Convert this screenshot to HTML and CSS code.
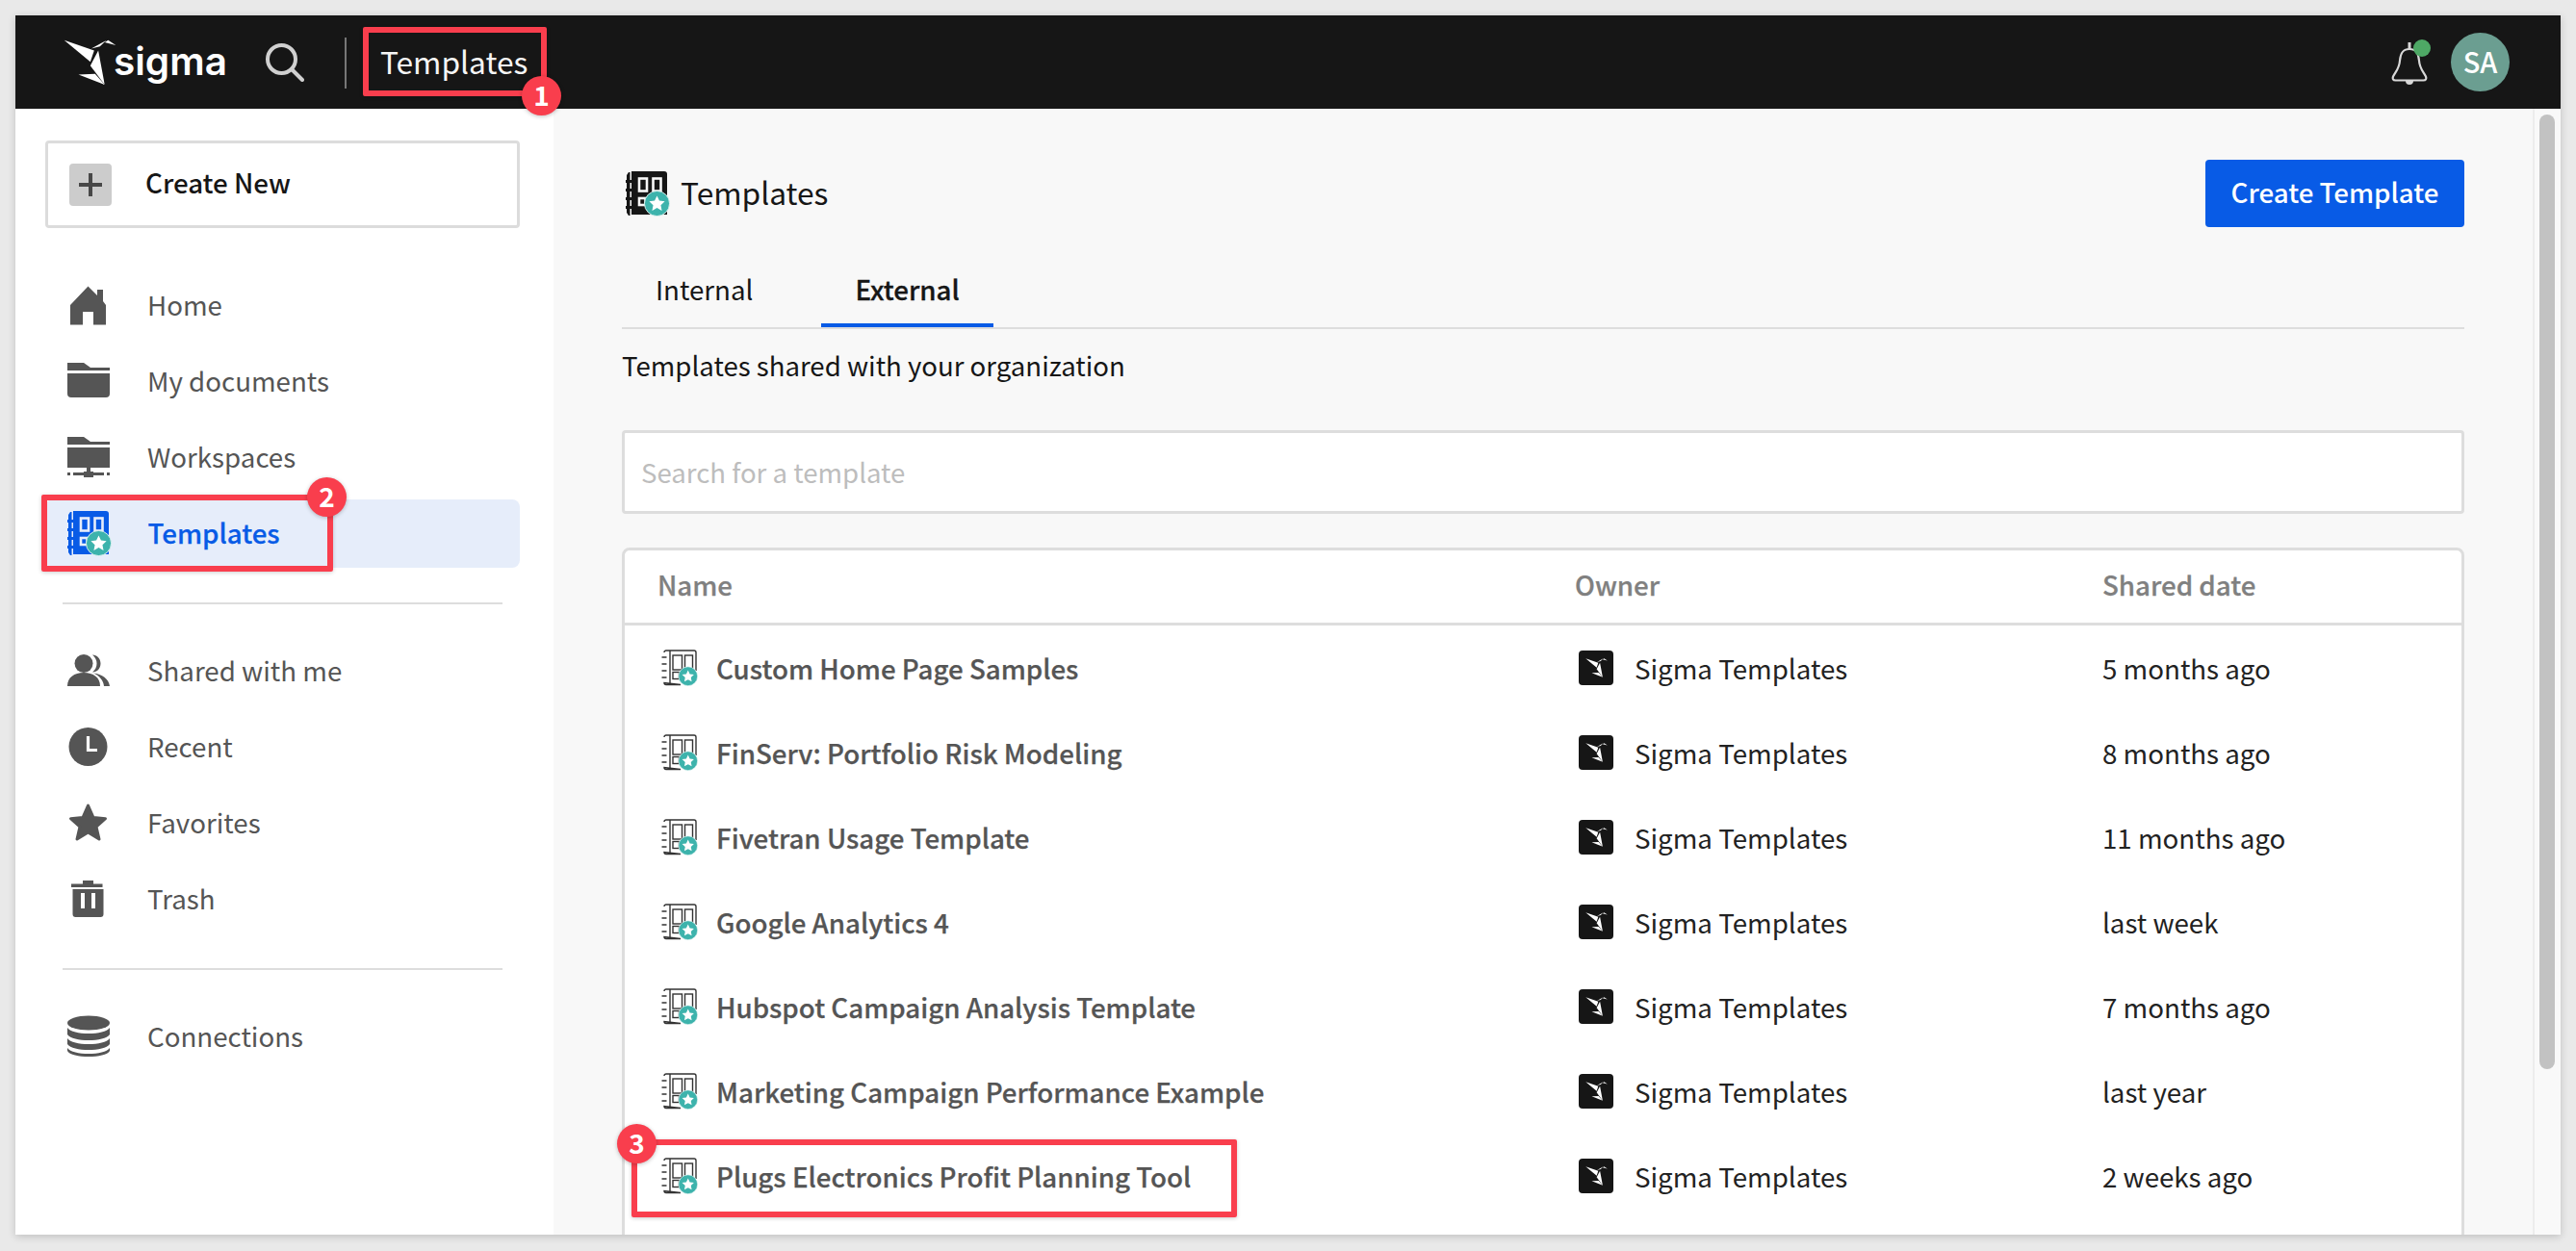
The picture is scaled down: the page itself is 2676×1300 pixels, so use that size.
FILE: index.html
```html
<!DOCTYPE html>
<html lang="en">
<head>
  <meta charset="UTF-8">
  <meta name="viewport" content="width=device-width, initial-scale=1.0">
  <title>Sigma Templates</title>
  <link rel="stylesheet" href="styles.css">
</head>
<body>
  <svg class="icon-defs" xmlns="http://www.w3.org/2000/svg">
    <symbol id="bird" viewBox="76 90 166 145">
      <path d="M78 92 172 125 160 160Z"/>
      <path d="M163 119 210 93 190 112Z"/>
      <path d="M205 99 216 92 240 108Z"/>
      <path d="M185 125 160 172 205 232Z"/>
      <path d="M123 200 175 198 205 232Z"/>
    </symbol>
    <symbol id="star-badge" viewBox="0 0 30 30">
      <circle cx="15" cy="15" r="14.500" fill="#3db3ac" stroke="#e6f5f3" stroke-width="1"/>
      <path d="M15 6l2.700 5.800 6.300.8-4.600 4.300 1.200 6.300-5.600-3.100-5.600 3.100 1.200-6.300-4.600-4.300 6.300-.8z" fill="#fff"/>
    </symbol>
    <symbol id="book-solid" viewBox="0 0 46 47">
      <path d="M6 0h34a3 3 0 0 1 3 3v42H6z"/>
      <path d="M0 9h6v3H0zM0 18h6v3H0zM0 27h6v3H0zM0 36h6v3H0z"/>
      <path d="M1 4 3 1h1.500v45H3l-2-3z"/>
      <g fill="none" stroke="var(--cut)" stroke-width="2.600">
        <rect x="14" y="7.500" width="8" height="13"/>
        <rect x="28.500" y="7.500" width="8" height="13"/>
        <rect x="14" y="28" width="6.500" height="7"/>
      </g>
      <use href="#star-badge" x="19" y="20" width="27" height="27"/>
    </symbol>
    <symbol id="book-line" viewBox="0 0 38 38">
      <g fill="none" stroke="#333" stroke-width="1.400">
        <path d="M3 3A2 2 0 0 1 5 1H34A2 2 0 0 1 36 3V22M20 36.500H5A2 2 0 0 1 3 34.500z"/>
        <path d="M9 1v35.500"/>
        <path d="M.5 8h5M.5 15h5M.5 22h5M.5 29h5"/>
        <rect x="12" y="6" width="9.500" height="15"/>
        <rect x="24.500" y="6" width="8" height="15"/>
        <rect x="12" y="23.500" width="6.500" height="7"/>
      </g>
      <use href="#star-badge" x="17.500" y="17.500" width="20.500" height="20.500"/>
    </symbol>
  </svg>

  <div class="window">
    <header class="topbar">
      <svg class="logo-mark"><use href="#bird"/></svg>
      <span class="logo-word">sigma</span>
      <svg class="search-icon" viewBox="0 0 40 40">
        <circle cx="16.500" cy="16.500" r="14.500"/>
        <path d="M27 27 38 38"/>
      </svg>
      <span class="topbar-divider"></span>
      <span class="topbar-title">Templates</span>
      <div class="topbar-right">
        <svg class="bell-icon" viewBox="0 0 41 44">
          <path class="bell-line" d="M19 7C11 7 9.500 13 9 19 8.500 27 5 30 2 35.500 1 38 2 39.500 4.500 39.500H33.500C36 39.500 37 38 36 35.500 33 30 29.500 27 29 19 28.500 13 27 7 19 7Z"/>
          <path class="bell-fill" d="M17.500 0h3v7h-3zM15 40h8a4 4 0 0 1-8 0z"/>
          <circle class="bell-dot" cx="32" cy="6" r="9"/>
        </svg>
        <span class="avatar">SA</span>
      </div>
    </header>

    <div class="app-layout">
      <aside class="sidebar">
        <button class="create-btn">
          <span class="create-plus"></span>
          <span class="create-label">Create New</span>
        </button>

        <nav>
          <ul class="sidebar-menu sidebar-menu-first">
            <li>
              <a href="#home">
                <svg class="nav-icon" viewBox="0 0 44 44"><path d="M21.500 2.500 31 12V6h6v12l3 4v20.500H27V29H16v13.500H3V22Z"/></svg>
                <span>Home</span>
              </a>
            </li>
            <li>
              <a href="#documents">
                <svg class="nav-icon" viewBox="0 0 44 44">
                  <path d="M0 3h17l7 5h20v3H0z"/>
                  <path d="M0 14h44v21a4 4 0 0 1-4 4H4a4 4 0 0 1-4-4z"/>
                </svg>
                <span>My documents</span>
              </a>
            </li>
            <li>
              <a href="#workspaces">
                <svg class="nav-icon" viewBox="0 0 44 44">
                  <path d="M0 1h17l7 5h20v3H0z"/>
                  <path d="M0 12h44v21H0z"/>
                  <path d="M20 33h4v4h3v6h-10v-6h3z"/>
                  <path d="M0 38h3v3H0zM6 38h32v3H6zM41 38h3v3h-3z"/>
                </svg>
                <span>Workspaces</span>
              </a>
            </li>
            <li>
              <a href="#templates" class="active">
                <svg class="nav-icon nav-book"><use href="#book-solid"/></svg>
                <span>Templates</span>
              </a>
            </li>
          </ul>

          <ul class="sidebar-menu">
            <li>
              <a href="#shared">
                <svg class="nav-icon" viewBox="0 0 44 44">
                  <circle cx="17" cy="14.500" r="9.500"/>
                  <path d="M0 38c0-9 7-14 17-14s17 5 17 14z"/>
                  <path d="M26 5.500c5 0 8.500 4 8.500 9s-3.500 9-8.500 9c3-2.500 4.500-5.500 4.500-9s-1.500-6.500-4.500-9z"/>
                  <path d="M27 24.500c9 1 16 6 17 13.500h-6c-.5-6-5-11-11-13.500z"/>
                </svg>
                <span>Shared with me</span>
              </a>
            </li>
            <li>
              <a href="#recent">
                <svg class="nav-icon" viewBox="0 0 44 44">
                  <circle cx="21.500" cy="22" r="20"/>
                  <path class="nav-cut" d="M21.500 11v14.500H31"/>
                </svg>
                <span>Recent</span>
              </a>
            </li>
            <li>
              <a href="#favorites">
                <svg class="nav-icon" viewBox="0 0 44 44">
                  <path class="nav-round" d="M21.500 4l5.500 12.500 12.500 1.200-9.500 8.300 3 13-11.500-7-11.500 7 3-13-9.500-8.300 12.500-1.200z"/>
                </svg>
                <span>Favorites</span>
              </a>
            </li>
            <li>
              <a href="#trash">
                <svg class="nav-icon" viewBox="0 0 44 44">
                  <path d="M16 3h11v3.500h9.500V10H4V6.500h12z"/>
                  <path fill-rule="evenodd" d="M5.500 12h32v26a3 3 0 0 1-3 3h-26a3 3 0 0 1-3-3zM14 16v16h4V16zM25 16v16h4V16z"/>
                </svg>
                <span>Trash</span>
              </a>
            </li>
          </ul>

          <ul class="sidebar-menu">
            <li>
              <a href="#connections">
                <svg class="nav-icon" viewBox="0 0 44 44">
                  <ellipse cx="22" cy="8" rx="22" ry="7.500"/>
                  <path d="M0 13c3 4 12 6 22 6s19-2 22-6v7c-3 4-12 6-22 6S3 24 0 20z"/>
                  <path d="M0 24c3 4 12 6 22 6s19-2 22-6v6c-3 4-12 6-22 6S3 34 0 30z"/>
                  <path d="M0 34c3 4 12 6 22 6s19-2 22-6v3c-2 4-12 6-22 6S2 41 0 37z"/>
                </svg>
                <span>Connections</span>
              </a>
            </li>
          </ul>
        </nav>
      </aside>

      <main class="main-content">
        <div class="page-head">
          <div class="page-title">
            <svg class="page-book"><use href="#book-solid"/></svg>
            <span class="page-title-text">Templates</span>
          </div>
          <button class="primary-btn">Create Template</button>
        </div>

        <div class="tabs">
          <span class="tab">Internal</span>
          <span class="tab active">External</span>
        </div>

        <p class="page-sub">Templates shared with your organization</p>

        <div class="search-box">Search for a template</div>

        <div class="table">
          <div class="table-row table-head">
            <span>Name</span>
            <span>Owner</span>
            <span>Shared date</span>
          </div>
          <div class="table-row">
            <span class="cell-name"><svg class="row-icon"><use href="#book-line"/></svg>Custom Home Page Samples</span>
            <span class="cell-owner"><span class="owner-icon"><svg><use href="#bird"/></svg></span>Sigma Templates</span>
            <span>5 months ago</span>
          </div>
          <div class="table-row">
            <span class="cell-name"><svg class="row-icon"><use href="#book-line"/></svg>FinServ: Portfolio Risk Modeling</span>
            <span class="cell-owner"><span class="owner-icon"><svg><use href="#bird"/></svg></span>Sigma Templates</span>
            <span>8 months ago</span>
          </div>
          <div class="table-row">
            <span class="cell-name"><svg class="row-icon"><use href="#book-line"/></svg>Fivetran Usage Template</span>
            <span class="cell-owner"><span class="owner-icon"><svg><use href="#bird"/></svg></span>Sigma Templates</span>
            <span>11 months ago</span>
          </div>
          <div class="table-row">
            <span class="cell-name"><svg class="row-icon"><use href="#book-line"/></svg>Google Analytics 4</span>
            <span class="cell-owner"><span class="owner-icon"><svg><use href="#bird"/></svg></span>Sigma Templates</span>
            <span>last week</span>
          </div>
          <div class="table-row">
            <span class="cell-name"><svg class="row-icon"><use href="#book-line"/></svg>Hubspot Campaign Analysis Template</span>
            <span class="cell-owner"><span class="owner-icon"><svg><use href="#bird"/></svg></span>Sigma Templates</span>
            <span>7 months ago</span>
          </div>
          <div class="table-row">
            <span class="cell-name"><svg class="row-icon"><use href="#book-line"/></svg>Marketing Campaign Performance Example</span>
            <span class="cell-owner"><span class="owner-icon"><svg><use href="#bird"/></svg></span>Sigma Templates</span>
            <span>last year</span>
          </div>
          <div class="table-row">
            <span class="cell-name"><svg class="row-icon"><use href="#book-line"/></svg>Plugs Electronics Profit Planning Tool</span>
            <span class="cell-owner"><span class="owner-icon"><svg><use href="#bird"/></svg></span>Sigma Templates</span>
            <span>2 weeks ago</span>
          </div>
        </div>
      </main>

      <div class="scroll-gutter"><div class="scroll-thumb"></div></div>
    </div>

    <!-- callouts drawn over the screenshot -->
    <div class="callout callout-1"><span class="badge badge-1">1</span></div>
    <div class="callout callout-2"><span class="badge badge-2">2</span></div>
    <div class="callout callout-3"><span class="badge badge-3">3</span></div>
  </div>
</body>
</html>
```

FILE: styles.css
```css
* { margin: 0; padding: 0; box-sizing: border-box; }

body {
  font-family: "Noto Sans CJK SC", "Noto Sans", sans-serif;
  background: #e9e9e9;
  padding: 16px;
  height: 1300px;
  overflow: hidden;
}

.icon-defs { display: none; }

.window {
  position: relative;
  width: 2644px;
  height: 1267px;
  display: flex;
  flex-direction: column;
  overflow: hidden;
  box-shadow: 0 2px 8px rgba(0,0,0,0.18);
}

/* top bar */
.topbar {
  flex: 0 0 97px;
  display: flex;
  align-items: center;
  padding: 0 53px 0 50px;
  background: #161616;
  color: #fff;
}

.logo-mark {
  width: 55px;
  height: 48px;
  fill: #fff;
}

.logo-word {
  margin-left: -3px;
  font-family: Inter, sans-serif;
  font-size: 40.5px;
  font-weight: 600;
  line-height: 48px;
  padding-bottom: 2px;
}

.search-icon {
  width: 40px;
  height: 40px;
  margin-left: 40px;
  fill: none;
  stroke: #d0d0d0;
  stroke-width: 4;
  stroke-linecap: round;
}

.topbar-divider {
  width: 2px;
  height: 53px;
  margin-left: 42px;
  margin-top: 2px;
  background: #777;
}

.topbar-title {
  margin-left: 35px;
  padding-bottom: 4px;
  font-size: 31.7px;
  line-height: 44px;
  color: #f5f5f5;
}

.topbar-right {
  margin-left: auto;
  display: flex;
  align-items: center;
  gap: 21px;
}

.bell-icon {
  width: 41px;
  height: 44px;
  margin-top: 2px;
  overflow: visible;
}

.bell-line { fill: none; stroke: #d8d8d8; stroke-width: 2.2; }
.bell-fill { fill: #d8d8d8; }
.bell-dot { fill: #4ea865; }

.avatar {
  width: 61px;
  height: 61px;
  padding-bottom: 3px;
  border-radius: 50%;
  background: #6b9e91;
  color: #fff;
  display: flex;
  align-items: center;
  justify-content: center;
  font-size: 29px;
  font-weight: 500;
}

.app-layout {
  flex: 1;
  min-height: 0;
  display: flex;
}

/* sidebar */
.sidebar {
  flex: 0 0 559px;
  background: #fff;
  padding: 33px 35px 0 31px;
}

.create-btn {
  display: flex;
  align-items: center;
  width: 493px;
  height: 91px;
  padding-left: 22px;
  background: #fff;
  border: 3px solid #dcdcdc;
  border-radius: 4px;
  font-family: inherit;
  font-size: 27.7px;
  font-weight: 500;
  color: #161616;
}

.create-plus {
  position: relative;
  width: 44px;
  height: 44px;
  margin-right: 35px;
  background: #ccc;
  border-radius: 4px;
}

.create-plus::before,
.create-plus::after {
  content: "";
  position: absolute;
  background: #484848;
}

.create-plus::before { left: 10px; right: 10px; top: 20px; height: 4px; }
.create-plus::after { top: 10px; bottom: 10px; left: 20px; width: 4px; }

.create-label { padding-bottom: 5px; }

.sidebar-menu {
  list-style: none;
  display: flex;
  flex-direction: column;
  gap: 8px;
  padding-bottom: 36px;
  margin: 0 18px 34px;
  border-bottom: 2px solid #ddd;
}

.sidebar-menu:last-child { border-bottom: none; }

.sidebar-menu-first {
  margin-top: 44px;
  gap: 8.33px;
}

.sidebar-menu a {
  display: flex;
  align-items: center;
  height: 71px;
  margin: 0 -18px;
  padding-left: 23px;
  color: #555;
  font-size: 27.7px;
  text-decoration: none;
  border-radius: 8px;
}

.sidebar-menu a span { padding-bottom: 2px; }

.sidebar-menu a.active {
  background: #e6edfa;
  color: #085be6;
  font-weight: 500;
  -webkit-text-stroke: 0.25px #085be6;
}

.nav-icon {
  flex: 0 0 44px;
  width: 44px;
  height: 44px;
  margin-right: 39px;
  fill: #555;
}

.nav-cut { fill: none; stroke: #fff; stroke-width: 3.2; }
.nav-round { stroke: #555; stroke-width: 3; stroke-linejoin: round; }

.nav-book {
  flex-basis: 46px;
  width: 46px;
  height: 47px;
  margin-right: 38px;
  margin-left: -0.5px;
  fill: #085be6;
  --cut: #e6edfa;
}

/* main column */
.main-content {
  flex: 1;
  min-width: 0;
  overflow: hidden;
  background: #f8f8f8;
  padding: 53px 71px 0;
}

.page-head {
  display: flex;
  align-items: center;
  justify-content: space-between;
  height: 70px;
}

.page-title {
  display: flex;
  align-items: center;
  gap: 11px;
  padding-left: 4px;
  font-size: 31.7px;
  color: #161616;
}

.page-title-text { padding-bottom: 4px; }

.page-book {
  width: 46px;
  height: 47px;
  fill: #161616;
  --cut: #f8f8f8;
}

.primary-btn {
  width: 269px;
  height: 70px;
  padding-bottom: 4px;
  background: #085be6;
  color: #fff;
  border: none;
  border-radius: 4px;
  font-family: inherit;
  font-size: 27.7px;
  font-weight: 500;
}

.tabs {
  display: flex;
  gap: 36px;
  margin-top: 28px;
  border-bottom: 2px solid #ddd;
}

.tab {
  height: 76px;
  padding: 0 35px;
  line-height: 72px;
  font-size: 27.7px;
  color: #161616;
}

.tab.active {
  font-weight: 500;
  -webkit-text-stroke: 0.3px #161616;
  box-shadow: inset 0 -4px 0 #085be6;
}

.page-sub {
  margin-top: 18px;
  font-size: 27.6px;
  line-height: 38px;
  color: #161616;
}

.search-box {
  margin-top: 49px;
  height: 87px;
  padding-left: 17px;
  padding-bottom: 2px;
  display: flex;
  align-items: center;
  background: #fff;
  border: 3px solid #ddd;
  border-radius: 4px;
  font-size: 27.6px;
  color: #bdbdbd;
}

.table {
  margin-top: 35px;
  padding-bottom: 60px;
  background: #fff;
  border: 3px solid #ddd;
  border-radius: 8px;
  font-size: 27.7px;
  color: #222;
}

.table-row {
  display: grid;
  grid-template-columns: 953px 548px 1fr;
  align-items: center;
  height: 88px;
  padding-left: 34px;
}

.table-head {
  height: 78px;
  border-bottom: 3px solid #ddd;
  color: #808080;
  font-weight: 500;
  -webkit-text-stroke: 0.25px #808080;
}

.table-head span { padding-bottom: 5px; }

.cell-name {
  display: flex;
  align-items: center;
  gap: 19px;
  padding-left: 4px;
  color: #555;
  font-weight: 500;
  -webkit-text-stroke: 0.25px #555;
}

.row-icon {
  width: 38px;
  height: 38px;
}

.cell-owner {
  display: flex;
  align-items: center;
  gap: 22px;
  padding-left: 4px;
}

.owner-icon {
  width: 36px;
  height: 36px;
  display: flex;
  align-items: center;
  justify-content: center;
  background: #161616;
  border-radius: 4px;
}

.owner-icon svg {
  width: 23px;
  height: 22px;
  fill: #fff;
}

/* scrollbar */
.scroll-gutter {
  flex: 0 0 29px;
  padding: 6px 6px 0 5px;
  background: #f9f9f9;
  border-left: 2px solid #ececec;
}

.scroll-thumb {
  width: 16px;
  height: 992px;
  background: #c2c2c2;
  border-radius: 8px;
}

/* numbered callouts */
.callout {
  position: absolute;
  border: 6px solid #f93e4d;
  border-radius: 2px;
  box-shadow: 0 1px 4px rgba(0,0,0,0.2);
}

.callout-1 { left: 361px; top: 12px; width: 191px; height: 72px; }
.callout-2 { left: 27px; top: 498px; width: 303px; height: 80px; }
.callout-3 { left: 640px; top: 1168px; width: 629px; height: 81px; }

.badge {
  position: absolute;
  width: 41px;
  height: 41px;
  padding-bottom: 3px;
  border-radius: 50%;
  background: #f93e4d;
  color: #fff;
  display: flex;
  align-items: center;
  justify-content: center;
  font-size: 28px;
  font-weight: 700;
  box-shadow: 0 1px 4px rgba(0,0,0,0.25);
}

.badge-1 { right: -21px; bottom: -26px; }
.badge-2 { right: -20px; top: -24px; }
.badge-3 { left: -21px; top: -22px; }
```
